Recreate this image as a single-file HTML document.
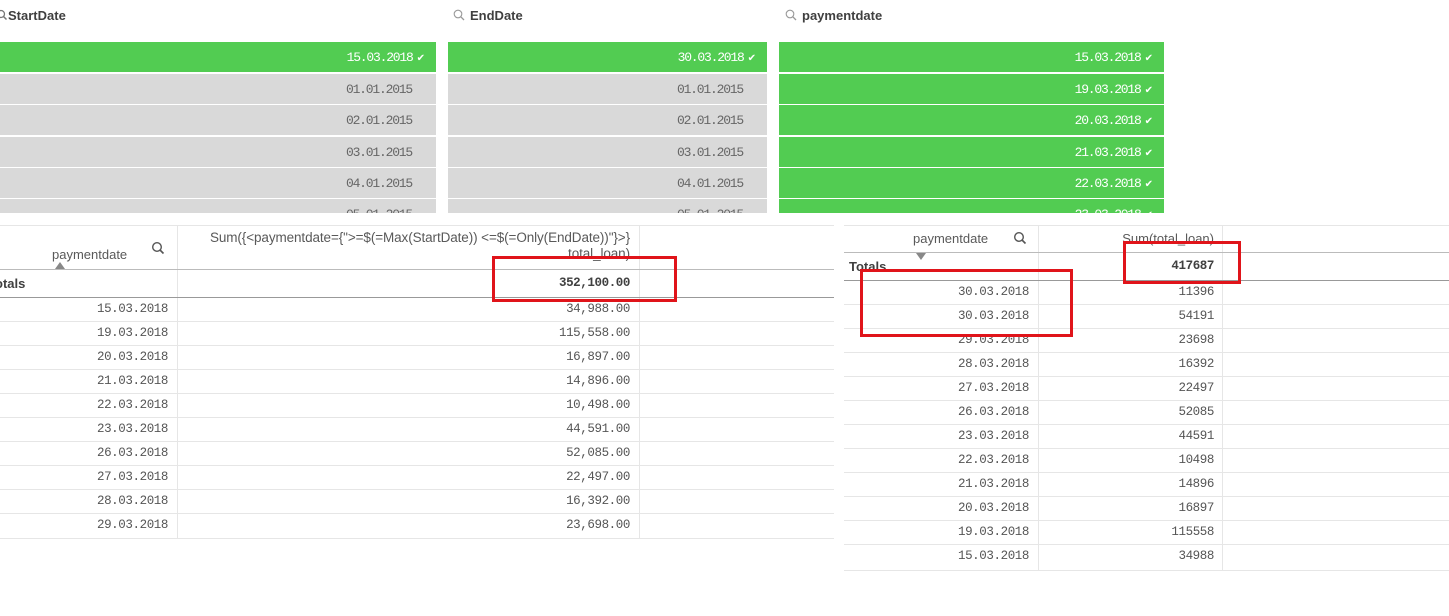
<!DOCTYPE html><html><head><style>
body{margin:0;width:1449px;height:616px;background:#fff;position:relative;overflow:hidden;font-family:"Liberation Sans",sans-serif;color:#595959}
div{box-sizing:border-box}
.a{position:absolute}
.t{font-weight:bold;font-size:13px;color:#404040;top:8px}
.r{position:absolute;height:30px;font-family:"Liberation Mono",monospace;font-size:13px;letter-spacing:-1.2px;text-align:right;line-height:31px}
.g{background:#52cc52;color:#fff}
.y{background:#d9d9d9;color:#666}
.ck{font-family:"DejaVu Sans",sans-serif;font-size:10px;margin-left:4px;letter-spacing:0}
.m{font-family:"Liberation Mono",monospace;font-size:12.5px;letter-spacing:-0.4px;text-align:right;position:absolute;color:#555}
.hl{position:absolute;height:1px;background:#e6e6e6}
.vl{position:absolute;width:1px;background:#e6e6e6}
.rb{position:absolute;border:3px solid #e0141a}
</style></head><body>
<svg class="a" style="left:-4px;top:9px" width="12" height="12"><circle cx="5" cy="5" r="3.5" fill="none" stroke="#777" stroke-width="1.3"/><line x1="7.5" y1="7.5" x2="10.5" y2="10.5" stroke="#777" stroke-width="1.5"/></svg>
<div class="a t" style="left:8px">StartDate</div>
<svg class="a" style="left:453px;top:9px" width="12" height="12"><circle cx="5" cy="5" r="3.8" fill="none" stroke="#999" stroke-width="1.1"/><line x1="7.6" y1="7.6" x2="11" y2="11" stroke="#999" stroke-width="1.3"/></svg>
<div class="a t" style="left:470px">EndDate</div>
<svg class="a" style="left:785px;top:9px" width="12" height="12"><circle cx="5" cy="5" r="3.8" fill="none" stroke="#999" stroke-width="1.1"/><line x1="7.6" y1="7.6" x2="11" y2="11" stroke="#999" stroke-width="1.3"/></svg>
<div class="a t" style="left:802px">paymentdate</div>

<div class="r g" style="left:0;width:436px;top:42px;padding-right:11px">15.03.2018<span class="ck">✔</span></div>
<div class="r y" style="left:0;width:436px;top:74px;padding-right:24px">01.01.2015</div>
<div class="r y" style="left:0;width:436px;top:105px;padding-right:24px">02.01.2015</div>
<div class="r y" style="left:0;width:436px;top:137px;padding-right:24px">03.01.2015</div>
<div class="r y" style="left:0;width:436px;top:168px;padding-right:24px">04.01.2015</div>
<div class="r y" style="left:0;width:436px;top:199px;height:14px;padding-right:24px;overflow:hidden">05.01.2015</div>

<div class="r g" style="left:448px;width:319px;top:42px;padding-right:11px">30.03.2018<span class="ck">✔</span></div>
<div class="r y" style="left:448px;width:319px;top:74px;padding-right:24px">01.01.2015</div>
<div class="r y" style="left:448px;width:319px;top:105px;padding-right:24px">02.01.2015</div>
<div class="r y" style="left:448px;width:319px;top:137px;padding-right:24px">03.01.2015</div>
<div class="r y" style="left:448px;width:319px;top:168px;padding-right:24px">04.01.2015</div>
<div class="r y" style="left:448px;width:319px;top:199px;height:14px;padding-right:24px;overflow:hidden">05.01.2015</div>

<div class="r g" style="left:779px;width:385px;top:42px;padding-right:11px">15.03.2018<span class="ck">✔</span></div>
<div class="r g" style="left:779px;width:385px;top:74px;padding-right:11px">19.03.2018<span class="ck">✔</span></div>
<div class="r g" style="left:779px;width:385px;top:105px;padding-right:11px">20.03.2018<span class="ck">✔</span></div>
<div class="r g" style="left:779px;width:385px;top:137px;padding-right:11px">21.03.2018<span class="ck">✔</span></div>
<div class="r g" style="left:779px;width:385px;top:168px;padding-right:11px">22.03.2018<span class="ck">✔</span></div>
<div class="r g" style="left:779px;width:385px;top:199px;height:14px;padding-right:11px;overflow:hidden">23.03.2018<span class="ck">✔</span></div>

<!-- left table -->
<div class="hl" style="left:0;width:834px;top:225px"></div>
<div class="vl" style="left:177px;top:225px;height:314px"></div>
<div class="vl" style="left:639px;top:225px;height:314px"></div>
<div class="a" style="left:52px;top:247px;font-size:13px">paymentdate</div>
<div class="a" style="left:55px;top:262px;width:0;height:0;border-left:5px solid transparent;border-right:5px solid transparent;border-bottom:7px solid #888"></div>
<svg class="a" style="left:151px;top:241px" width="14" height="14"><circle cx="6" cy="6" r="4.3" fill="none" stroke="#555" stroke-width="1.4"/><line x1="9" y1="9" x2="12.5" y2="12.5" stroke="#555" stroke-width="1.6"/></svg>
<div class="a" style="left:180px;width:450px;top:230px;font-size:13.5px;text-align:right;line-height:16px;letter-spacing:-0.1px">Sum({&lt;paymentdate={"&gt;=$(=Max(StartDate)) &lt;=$(=Only(EndDate))"}&gt;}<br>total_loan)</div>
<div class="a" style="left:0;width:834px;top:269px;height:1px;background:#bbb"></div>
<div class="a" style="left:-5px;top:276px;font-size:13px;font-weight:bold;color:#404040">otals</div>
<div class="m" style="left:180px;width:450px;top:276px;font-weight:bold;color:#404040">352,100.00</div>
<div class="a" style="left:0;width:834px;top:297px;height:1px;background:#999"></div>

<div class="m" style="left:0;width:168px;top:302px">15.03.2018</div><div class="m" style="left:180px;width:450px;top:302px">34,988.00</div><div class="hl" style="left:0;width:834px;top:321px"></div>
<div class="m" style="left:0;width:168px;top:326px">19.03.2018</div><div class="m" style="left:180px;width:450px;top:326px">115,558.00</div><div class="hl" style="left:0;width:834px;top:345px"></div>
<div class="m" style="left:0;width:168px;top:350px">20.03.2018</div><div class="m" style="left:180px;width:450px;top:350px">16,897.00</div><div class="hl" style="left:0;width:834px;top:369px"></div>
<div class="m" style="left:0;width:168px;top:374px">21.03.2018</div><div class="m" style="left:180px;width:450px;top:374px">14,896.00</div><div class="hl" style="left:0;width:834px;top:393px"></div>
<div class="m" style="left:0;width:168px;top:398px">22.03.2018</div><div class="m" style="left:180px;width:450px;top:398px">10,498.00</div><div class="hl" style="left:0;width:834px;top:417px"></div>
<div class="m" style="left:0;width:168px;top:422px">23.03.2018</div><div class="m" style="left:180px;width:450px;top:422px">44,591.00</div><div class="hl" style="left:0;width:834px;top:441px"></div>
<div class="m" style="left:0;width:168px;top:446px">26.03.2018</div><div class="m" style="left:180px;width:450px;top:446px">52,085.00</div><div class="hl" style="left:0;width:834px;top:465px"></div>
<div class="m" style="left:0;width:168px;top:470px">27.03.2018</div><div class="m" style="left:180px;width:450px;top:470px">22,497.00</div><div class="hl" style="left:0;width:834px;top:489px"></div>
<div class="m" style="left:0;width:168px;top:494px">28.03.2018</div><div class="m" style="left:180px;width:450px;top:494px">16,392.00</div><div class="hl" style="left:0;width:834px;top:513px"></div>
<div class="m" style="left:0;width:168px;top:518px">29.03.2018</div><div class="m" style="left:180px;width:450px;top:518px">23,698.00</div><div class="hl" style="left:0;width:834px;top:538px"></div>

<!-- right table -->
<div class="hl" style="left:844px;width:605px;top:225px"></div>
<div class="vl" style="left:1038px;top:225px;height:346px"></div>
<div class="vl" style="left:1222px;top:225px;height:346px"></div>
<div class="a" style="left:913px;top:231px;font-size:13px">paymentdate</div>
<svg class="a" style="left:1013px;top:231px" width="14" height="14"><circle cx="6" cy="6" r="4.3" fill="none" stroke="#555" stroke-width="1.4"/><line x1="9" y1="9" x2="12.5" y2="12.5" stroke="#555" stroke-width="1.6"/></svg>
<div class="a" style="left:1040px;width:174px;top:231px;font-size:13px;text-align:right">Sum(total_loan)</div>
<div class="a" style="left:844px;width:605px;top:252px;height:1px;background:#bbb"></div>
<div class="a" style="left:916px;top:253px;width:0;height:0;border-left:5px solid transparent;border-right:5px solid transparent;border-top:7px solid #888"></div>
<div class="a" style="left:849px;top:259px;font-size:13px;font-weight:bold;color:#404040">Totals</div>
<div class="m" style="left:1040px;width:174px;top:259px;font-weight:bold;color:#404040">417687</div>
<div class="a" style="left:844px;width:605px;top:280px;height:1px;background:#999"></div>

<div class="m" style="left:844px;width:185px;top:285px">30.03.2018</div><div class="m" style="left:1040px;width:174px;top:285px">11396</div><div class="hl" style="left:844px;width:605px;top:304px"></div>
<div class="m" style="left:844px;width:185px;top:309px">30.03.2018</div><div class="m" style="left:1040px;width:174px;top:309px">54191</div><div class="hl" style="left:844px;width:605px;top:328px"></div>
<div class="m" style="left:844px;width:185px;top:333px">29.03.2018</div><div class="m" style="left:1040px;width:174px;top:333px">23698</div><div class="hl" style="left:844px;width:605px;top:352px"></div>
<div class="m" style="left:844px;width:185px;top:357px">28.03.2018</div><div class="m" style="left:1040px;width:174px;top:357px">16392</div><div class="hl" style="left:844px;width:605px;top:376px"></div>
<div class="m" style="left:844px;width:185px;top:381px">27.03.2018</div><div class="m" style="left:1040px;width:174px;top:381px">22497</div><div class="hl" style="left:844px;width:605px;top:400px"></div>
<div class="m" style="left:844px;width:185px;top:405px">26.03.2018</div><div class="m" style="left:1040px;width:174px;top:405px">52085</div><div class="hl" style="left:844px;width:605px;top:424px"></div>
<div class="m" style="left:844px;width:185px;top:429px">23.03.2018</div><div class="m" style="left:1040px;width:174px;top:429px">44591</div><div class="hl" style="left:844px;width:605px;top:448px"></div>
<div class="m" style="left:844px;width:185px;top:453px">22.03.2018</div><div class="m" style="left:1040px;width:174px;top:453px">10498</div><div class="hl" style="left:844px;width:605px;top:472px"></div>
<div class="m" style="left:844px;width:185px;top:477px">21.03.2018</div><div class="m" style="left:1040px;width:174px;top:477px">14896</div><div class="hl" style="left:844px;width:605px;top:496px"></div>
<div class="m" style="left:844px;width:185px;top:501px">20.03.2018</div><div class="m" style="left:1040px;width:174px;top:501px">16897</div><div class="hl" style="left:844px;width:605px;top:520px"></div>
<div class="m" style="left:844px;width:185px;top:525px">19.03.2018</div><div class="m" style="left:1040px;width:174px;top:525px">115558</div><div class="hl" style="left:844px;width:605px;top:544px"></div>
<div class="m" style="left:844px;width:185px;top:549px">15.03.2018</div><div class="m" style="left:1040px;width:174px;top:549px">34988</div><div class="hl" style="left:844px;width:605px;top:570px"></div>

<div class="rb" style="left:492px;top:256px;width:185px;height:46px"></div>
<div class="rb" style="left:1123px;top:241px;width:118px;height:43px"></div>
<div class="rb" style="left:860px;top:269px;width:213px;height:68px"></div>
</body></html>
